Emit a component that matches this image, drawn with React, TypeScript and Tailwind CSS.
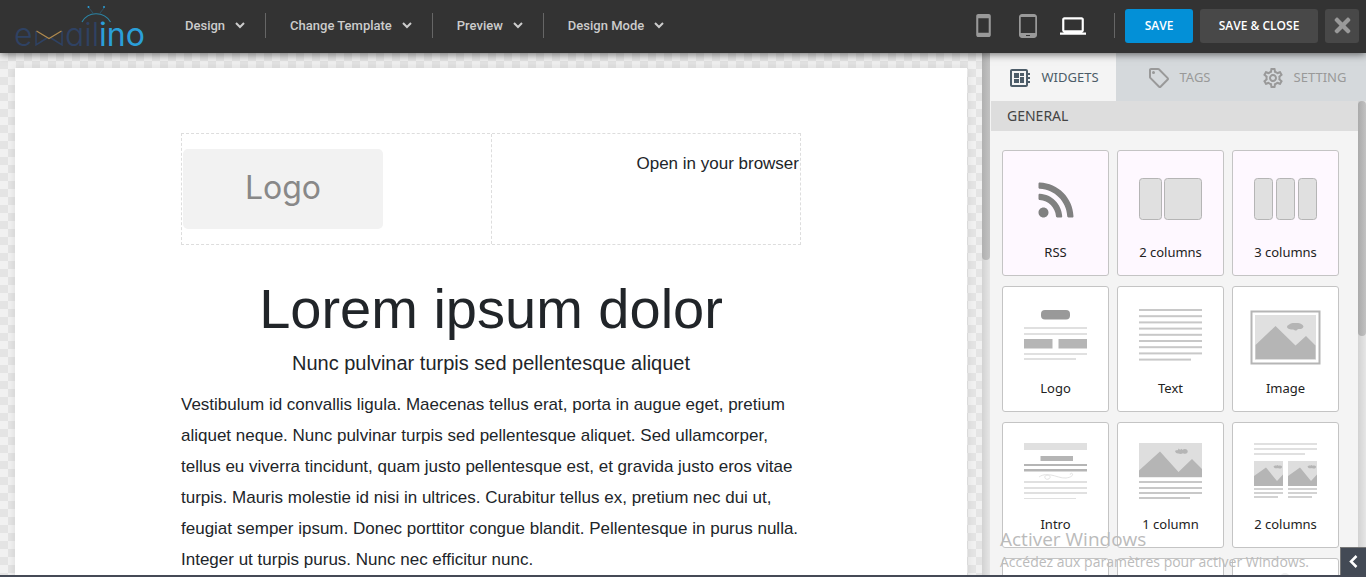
import type { ReactNode } from 'react';
import { FaRss, FaTimes } from 'react-icons/fa';
import {
  MdLaptop,
  MdOutlineDeveloperBoard,
  MdOutlineSell,
  MdOutlineSettings,
  MdStayCurrentPortrait,
  MdTabletAndroid,
} from 'react-icons/md';

const menus = ['Design', 'Change Template', 'Preview', 'Design Mode'];

const tabs = [
  { label: 'WIDGETS', icon: <MdOutlineDeveloperBoard size={24} />, active: true },
  { label: 'TAGS', icon: <MdOutlineSell size={24} />, active: false },
  { label: 'SETTING', icon: <MdOutlineSettings size={24} />, active: false },
];

const Line = ({ y, x = 0, w = 63, h = 2, fill = '#e0e0e0' }: { y: number; x?: number; w?: number; h?: number; fill?: string }) => (
  <rect x={x} y={y} width={w} height={h} fill={fill} />
);

const Column = ({ x, w }: { x: number; w: number }) => (
  <rect x={x + 0.5} y="8.5" width={w - 1} height="41" rx="3" fill="#e0e0e0" stroke="#b5b5b5" />
);

const Thumb = ({ children }: { children: ReactNode }) => (
  <svg width="63" height="60" viewBox="0 0 63 60" className="overflow-visible" aria-hidden="true">
    {children}
  </svg>
);

const SmallPicture = ({ x }: { x: number }) => (
  <g transform={`translate(${x} 0)`}>
    <rect y="19" width="29" height="25" fill="#dedede" />
    <path d="M0 34 12 25.5 23 39 29 32.500V44H0Z" fill="#b5b5b5" />
    <path d="M19.500 24.500c1-1.500 3-.5 4-1.500l1 .8c2-1 4 0 3.500 1.500s-2.500 1.700-4 .7c-1.500.6-4 .5-4.500-1.500Z" fill="#b5b5b5" />
    <Line y={46} w={29} fill="#d2d2d2" />
    <Line y={50} w={29} fill="#d2d2d2" />
    <Line y={54} w={24} fill="#d2d2d2" />
  </g>
);

const widgets: { label: string; layout?: boolean; art: ReactNode }[] = [
  {
    label: 'RSS',
    layout: true,
    art: <FaRss size={40} className="text-[#808080]" />,
  },
  {
    label: '2 columns',
    layout: true,
    art: (
      <Thumb>
        <Column x={0} w={23} />
        <Column x={25} w={38} />
      </Thumb>
    ),
  },
  {
    label: '3 columns',
    layout: true,
    art: (
      <Thumb>
        <Column x={0} w={19} />
        <Column x={22} w={19} />
        <Column x={44} w={19} />
      </Thumb>
    ),
  },
  {
    label: 'Logo',
    art: (
      <Thumb>
        <rect x="17" y="4" width="29" height="9.500" rx="4" fill="#999" />
        <Line y={21} />
        <Line y={27} />
        <rect y="33" width="28.500" height="9.500" fill="#b5b5b5" />
        <rect x="34.500" y="33" width="28.500" height="9.500" fill="#b5b5b5" />
        <Line y={47} />
        <Line y={52} w={52} />
      </Thumb>
    ),
  },
  {
    label: 'Text',
    art: (
      <Thumb>
        {[3, 9.2, 15.4, 21.6, 27.8, 34, 40.2, 46.4].map((y) => (
          <Line key={y} y={y} fill="#c8c8c8" />
        ))}
        <Line y={52.600} w={52} fill="#c8c8c8" />
      </Thumb>
    ),
  },
  {
    label: 'Image',
    art: (
      <Thumb>
        <rect x="-2.500" y="5.500" width="68" height="52" fill="#fff" stroke="#b5b5b5" strokeWidth="2" />
        <rect x="1" y="9" width="61" height="45" fill="#e0e0e0" />
        <path d="M1.500 39 21.500 20 41.500 39.500 52 30 61.500 39.500V53H1.500Z" fill="#b5b5b5" />
        <path d="M33 21c0-2 2-2 3-3 2-1.400 4-.7 6-1 3-.4 7 1 7.500 3.500-.5 2-2 2.500-4 2.500-1.500 0-2 0-3 1.500-2 .5-2-1-3.500-1-2.500 0-5.500-.5-6-2.500Z" fill="#b5b5b5" />
      </Thumb>
    ),
  },
  {
    label: 'Intro',
    art: (
      <Thumb>
        <Line y={1} h={7} />
        <Line x={16.500} y={14} w={32.500} h={5} fill="#b5b5b5" />
        <Line y={22} fill="#b5b5b5" />
        <Line y={27} h={2.500} fill="#b5b5b5" />
        <path
          d="M15 35c4-3 10-3 11-.5s-4 4-5 1.500 2-3.500 6-3 10 3.500 15 3 7-2.500 6.500-4-3-.5-2 .8"
          fill="none"
          stroke="#dcdcdc"
          strokeWidth="0.800"
        />
        <Line y={39} />
        <Line y={45} />
        <Line y={50} />
        <Line y={56} w={52} h={1} />
      </Thumb>
    ),
  },
  {
    label: '1 column',
    art: (
      <Thumb>
        <rect y="1" width="63" height="34.500" fill="#dedede" />
        <path d="M0 28.500 21 9.500 39.500 30 53 17 63 27V35H0Z" fill="#b5b5b5" />
        <path d="M36 9c1-1 2-.5 3-1l.5-1.500 1.500 1.200 2-.9.3 1.200c2-1.800 5-1.200 5.400 1s-2 3.500-4.700 2.200c-2 1.200-3.500.5-4.500.2-1.500.2-3-.4-3.500-2.400Z" fill="#b5b5b5" />
        <Line y={39} fill="#c8c8c8" />
        <Line y={45} fill="#c8c8c8" />
        <Line y={50} fill="#c8c8c8" />
        <Line y={55} w={51} fill="#c8c8c8" />
      </Thumb>
    ),
  },
  {
    label: '2 columns',
    art: (
      <Thumb>
        <Line y={1} />
        <Line y={6} />
        <Line y={11} w={51} />
        <SmallPicture x={0} />
        <SmallPicture x={34} />
      </Thumb>
    ),
  },
  { label: '3 columns', art: <Thumb><Line y={1} /></Thumb> },
  { label: 'Button', art: <Thumb><Line y={1} /></Thumb> },
  { label: 'Social', art: <Thumb><circle cx="31" cy="0" r="5" fill="#eee" /></Thumb> },
];

const BrandLogo = () => (
  <svg
    width="132"
    height="51"
    viewBox="0 -4 132 51"
    role="img"
    aria-label="emailino"
    className="overflow-visible font-['Inter',sans-serif] font-light [font-feature-settings:'cv11']"
  >
    <g fill="#2f4263" fontSize="32">
      <text x="-1" y="42">e</text>
      <text x="50" y="42">ail</text>
    </g>
    <text x="84" y="42" fontSize="32" fill="#2b9fd9" className="font-normal">ino</text>
    <path d="M21 27V41L32 34M47 27V41L36 34" fill="none" stroke="#2f4263" strokeWidth="1.500" />
    <path d="M21.500 27 34 34.500 46.500 27" fill="none" stroke="#b08a4e" strokeWidth="1.200" />
    <path d="M67 18C73 7 89 7 95.500 18" fill="none" stroke="#2b86a8" strokeWidth="1.200" />
    <path d="M74 4 78 9M89 4 85 9" fill="none" stroke="#2f5a72" strokeWidth="0.800" />
    <circle cx="73.500" cy="3" r="1" fill="#2b9fd9" />
    <circle cx="89" cy="3" r="1" fill="#2b9fd9" />
  </svg>
);

const Chevron = () => (
  <svg width="10" height="7" viewBox="0 0 10 7" fill="none" stroke="currentColor" strokeWidth="2" aria-hidden="true">
    <path d="M1 1 5 5 9 1" />
  </svg>
);

const Scrollbar = ({ children }: { children: ReactNode }) => (
  <div className="w-2 shrink-0 bg-linear-to-r from-[#d2d2d2] to-[#e6e6e6]" aria-hidden="true">
    {children}
  </div>
);

const Header = () => (
  <header className="relative z-10 flex h-[53px] shrink-0 items-center bg-[#333] pr-[7px] pb-[2px] pl-[15px] shadow-[0_1px_8px_rgba(0,0,0,0.6)]">
    <a href="#home" className="mr-[14px] block">
      <BrandLogo />
    </a>
    <nav className="flex items-center font-['Roboto',sans-serif] text-[13px] font-medium text-[#ccc]">
      {menus.map((menu) => (
        <div key={menu} className="h-[25px] border-r border-[#666] last:border-r-0">
          <button type="button" className="flex h-full items-center gap-[10px] pr-5 pl-6">
            {menu}
            <Chevron />
          </button>
        </div>
      ))}
    </nav>
    <div className="ml-auto flex items-center font-['Open_Sans',sans-serif]">
      <div className="mr-7 flex items-center gap-5 text-[#999]">
        <button type="button" aria-label="Phone view"><MdStayCurrentPortrait size={25} /></button>
        <button type="button" aria-label="Tablet view"><MdTabletAndroid size={24} /></button>
        <button type="button" aria-label="Desktop view" className="text-white"><MdLaptop size={26} /></button>
      </div>
      <div className="flex items-center gap-[7px] text-xs font-semibold text-white">
        <span className="mr-[3px] h-[25px] w-px bg-[#666]" />
        <button type="button" className="h-[34px] w-[68px] rounded-[3px] bg-[#0390d7]">SAVE</button>
        <button type="button" className="h-[34px] w-[118px] rounded-[3px] bg-[#484848]">SAVE &amp; CLOSE</button>
        <button type="button" aria-label="Close" className="flex h-[34px] w-[34px] items-center justify-center rounded-[3px] bg-[#484848] text-[#999]">
          <FaTimes size={23} />
        </button>
      </div>
    </div>
  </header>
);

const Canvas = () => (
  <main className="flex min-w-0 flex-1 overflow-hidden">
    <div className="min-w-0 flex-1 bg-[repeating-conic-gradient(#e4e4e4_0_25%,#f1f1f1_0_50%)] bg-[length:16px_16px] p-[15px]">
      <div className="min-h-full bg-white pt-[65px] pb-16 font-['Liberation_Sans',Arial,sans-serif] text-[17px] leading-[31px] text-[#212529] shadow-[0_0_8px_rgba(0,0,0,0.1)]">
        <div className="mx-auto max-w-[620px]">
          <div className="flex h-28 border border-dashed border-[#ddd]">
            <div className="flex-1 border-r border-dashed border-[#ddd] px-px py-[15px]">
              <div className="flex h-20 w-[200px] items-center justify-center rounded-[5px] bg-[#f2f2f2] pb-1 font-['Inter',sans-serif] text-[32px] font-normal text-[#888]">
                Logo
              </div>
            </div>
            <div className="flex-1 px-px pt-[14px] text-right">
              <a href="#browser">Open in your browser</a>
            </div>
          </div>
          <h1 className="mt-[30px] text-center text-[56px] leading-[68px]">Lorem ipsum dolor</h1>
          <h2 className="mt-[5px] text-center text-xl leading-[30px]">Nunc pulvinar turpis sed pellentesque aliquet</h2>
          <p className="mt-[11px]">
            Vestibulum id convallis ligula. Maecenas tellus erat, porta in augue eget, pretium aliquet neque. Nunc
            pulvinar turpis sed pellentesque aliquet. Sed ullamcorper, tellus eu viverra tincidunt, quam justo
            pellentesque est, et gravida justo eros vitae turpis. Mauris molestie id nisi in ultrices. Curabitur tellus
            ex, pretium nec dui ut, feugiat semper ipsum. Donec porttitor congue blandit. Pellentesque in purus nulla.
            Integer ut turpis purus. Nunc nec efficitur nunc.
          </p>
        </div>
      </div>
    </div>
    <Scrollbar>
      <div className="h-[207px] rounded-b bg-linear-to-r from-[#b0b0b0] to-[#c2c2c2]" />
    </Scrollbar>
  </main>
);

const Sidebar = () => (
  <aside className="flex w-[376px] shrink-0 flex-col overflow-hidden bg-[#f4f4f4] pl-px font-['Noto_Sans',sans-serif] text-[13px]">
    <div role="tablist" className="flex h-12 shrink-0">
      {tabs.map((tab) => (
        <button
          key={tab.label}
          type="button"
          role="tab"
          aria-selected={tab.active}
          className={`flex flex-1 items-center justify-center gap-[9px] pt-px ${
            tab.active ? 'bg-[#f4f4f4] text-[#4c5c68]' : 'bg-[#d5d9dc] text-[#999]'
          }`}
        >
          {tab.icon}
          {tab.label}
        </button>
      ))}
    </div>
    <div className="flex min-h-0 flex-1">
      <div className="min-w-0 flex-1 overflow-hidden">
        <h3 className="bg-[#ddd] px-4 text-sm leading-[30px] text-[#444]">GENERAL</h3>
        <div className="grid grid-cols-3 gap-x-2 gap-y-[10px] pt-[19px] pr-[19px] pl-[11px]">
          {widgets.map((widget, i) => (
            <button
              key={i}
              type="button"
              className={`flex h-[126px] flex-col items-center gap-3 rounded-[3px] border border-[#c4c4c4] pt-[19px] text-[#222] ${
                widget.layout ? 'bg-[#fef8ff]' : 'bg-white'
              }`}
            >
              <span className="flex h-[60px] items-center">{widget.art}</span>
              <span className="leading-5">{widget.label}</span>
            </button>
          ))}
        </div>
      </div>
      <Scrollbar>
        <div className="h-[235px] rounded bg-linear-to-r from-[#aaa] to-[#c2c2c2]" />
      </Scrollbar>
    </div>
  </aside>
);

export default function App() {
  return (
    <div className="relative flex h-screen flex-col overflow-hidden border-b-2 border-[#454a56]">
      <Header />
      <div className="flex min-h-0 flex-1">
        <Canvas />
        <Sidebar />
      </div>
      <button type="button" aria-label="Collapse panel" className="absolute right-0 bottom-0 z-10 flex h-7 w-[26px] items-center justify-center border-t border-l border-[#777] bg-[#434a55] text-white">
        <svg width="9" height="13" viewBox="0 0 9 13" fill="none" stroke="currentColor" strokeWidth="2.500" aria-hidden="true">
          <path d="M7.500 1 2 6.500 7.500 12" />
        </svg>
      </button>
      <div className="pointer-events-none absolute right-[53px] bottom-[2px] w-[313px] font-['Open_Sans',sans-serif] whitespace-nowrap text-[#bbb]">
        <p className="text-[19px] leading-6">Activer Windows</p>
        <p className="text-[14px] leading-[22px]">Accédez aux paramètres pour activer Windows.</p>
      </div>
    </div>
  );
}
